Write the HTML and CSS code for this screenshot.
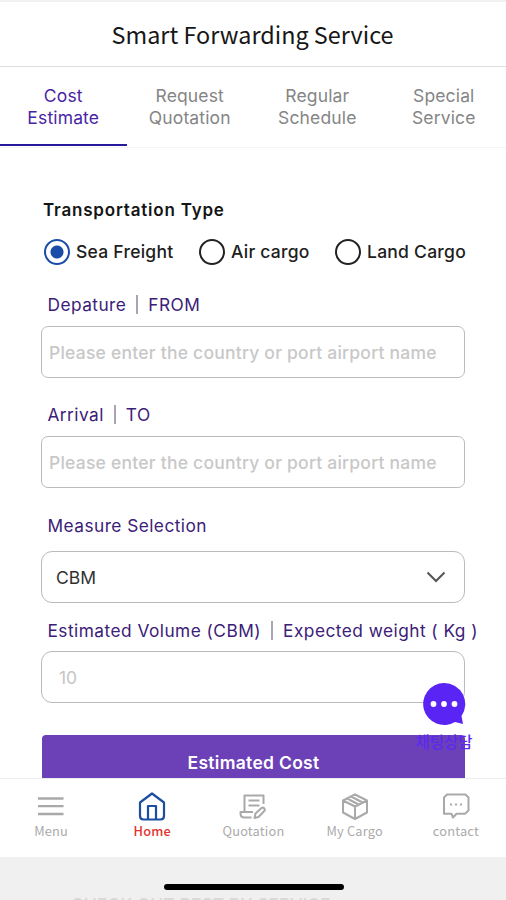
FILE: index.html
```html
<!DOCTYPE html>
<html lang="en">
<head>
<meta charset="utf-8">
<title>Smart Forwarding Service</title>
<link rel="stylesheet" href="styles.css">
</head>
<body>
<header class="header"><h1>Smart Forwarding Service</h1></header>
<nav class="tabs">
  <a class="tab active">Cost<br>Estimate</a>
  <a class="tab">Request<br>Quotation</a>
  <a class="tab">Regular<br>Schedule</a>
  <a class="tab">Special<br>Service</a>
</nav>
<main class="form">
  <h2>Transportation Type</h2>
  <div class="radios">
    <span class="radio checked"><i></i><span>Sea Freight</span></span>
    <span class="radio"><i></i><span>Air cargo</span></span>
    <span class="radio"><i></i><span>Land Cargo</span></span>
  </div>
  <div class="label">Depature<b></b>FROM</div>
  <div class="field hint">Please enter the country or port airport name</div>
  <div class="label arrival">Arrival<b></b>TO</div>
  <div class="field hint">Please enter the country or port airport name</div>
  <div class="label measure">Measure Selection</div>
  <div class="field select">CBM
    <svg width="20" height="12" viewBox="0 0 20 12"><path d="M1.500 1.500L10 10L18.500 1.500" fill="none" stroke="#555" stroke-width="2"/></svg>
  </div>
  <div class="label volume">Estimated Volume (CBM)<b></b>Expected weight ( Kg )</div>
  <div class="field amount">10</div>
  <div class="submit">Estimated Cost</div>
</main>
<div class="chat">
  <svg width="44" height="44" viewBox="0 0 44 44"><path d="M22 1A21 21 0 1 0 33 40L41 42L39.500 34A21 21 0 0 0 22 1Z" fill="#5a24f5"/><g fill="#fff"><circle cx="11.500" cy="22" r="2.900"/><circle cx="22" cy="22" r="2.900"/><circle cx="32.500" cy="22" r="2.900"/></g></svg>
  <span>채팅상담</span>
</div>
<nav class="bottom">
  <a><svg width="32" height="32" viewBox="0 0 32 32"><path d="M3 7.500H28.500M3 15.200H28.500M3 23H28.500" stroke-width="2.300"/></svg><span>Menu</span></a>
  <a class="home"><svg width="32" height="32" viewBox="0 0 32 32"><path d="M16 2.500L4 11.500V25Q4 28.500 7.500 28.500H24.500Q28 28.500 28 25V11.500ZM12 28.500V15H20V28.500" stroke-width="2.200"/></svg><span>Home</span></a>
  <a><svg width="32" height="32" viewBox="0 0 32 32"><path d="M7.500 20.500V4.500H26.500V13M11.500 9.500H22.500M11.500 14.500H22.500M16 21H3.500V22.500Q3.500 26.500 7.500 26.500H14.500M18.500 22.500L24.500 17Q26 16 27.300 17.500Q28.500 19 27 20.300L21.500 26L17.500 27Z"/></svg><span>Quotation</span></a>
  <a><svg width="32" height="32" viewBox="0 0 32 32"><path d="M16 3.500L28 9.500V21.500L16 28L4 21.500V9.500ZM4 9.500L16 15.500L28 9.500M16 15.500V28M12.200 5.500L23.500 11.500M8.200 7.500L19.500 13.500"/></svg><span>My Cargo</span></a>
  <a><svg width="32" height="32" viewBox="0 0 32 32"><path d="M7 3.500H25.500L28.500 6.500V19.500L25 22.800H16.500L13 26.500L11.500 22.800H4V6.500Z"/><path d="M10 13.500H12M15 13.500H17M20 13.500H22"/></svg><span>contact</span></a>
</nav>
<footer class="device"><div class="handle"></div><p>CHECK OUT BEST BY SERVICE</p></footer>
</body>
</html>
```
FILE: styles.css
```css
*{box-sizing:border-box}
body{margin:0;width:506px;height:900px;overflow:hidden;background:#fff;font-family:Inter,"Liberation Sans",sans-serif;display:flex;flex-direction:column;position:relative}
.header{height:67px;flex:none;border-top:2px solid #f1f1f1;border-bottom:1.500px solid #dedede;text-align:center}
.header h1{margin:0;font:400 23.400px/64px "Noto Sans CJK KR","Noto Sans",sans-serif;color:#171717;padding-right:1px}
.tabs{height:81px;flex:none;display:grid;grid-template-columns:repeat(4,1fr);border-bottom:1px solid #f4f4f4}
.tab{padding-top:18px;text-align:center;font-size:17.500px;line-height:22px;letter-spacing:.15px;color:#858585}
.tab:nth-child(n+3){padding-left:2px}
.tab.active{color:#4925a5;border-bottom:2px solid #28189c;margin-bottom:1px}
.form{height:630px;flex:none;padding:52px 41px 0;overflow:hidden}
h2{margin:0 0 0 2px;font-size:17px;line-height:20px;font-weight:600;letter-spacing:.8px;color:#151515}
.radios{display:flex;margin:18px 0 0 3px;height:28px;align-items:center}
.radio{display:flex;align-items:center;gap:6px;flex:none;font-size:17.500px;font-weight:450;color:#202020;width:155px;white-space:nowrap;letter-spacing:.25px}
.radio span{margin-top:-2px}
.radio:nth-child(2){width:136px}
.radio i{width:26px;height:26px;flex:none;border:2px solid #222;border-radius:50%}
.radio.checked i{border-color:#1b4ca8;background:radial-gradient(circle,#1b4ca8 6px,#fff 7px)}
.label{margin:26px 0 10px 6.500px;height:24px;display:flex;align-items:center;font-size:17.300px;letter-spacing:.45px;color:#3b2078;white-space:nowrap}
.label b{width:2px;height:19px;flex:none;margin:0 10px;background:#aaa3b7}
.label.arrival{margin:24px 0 10px 6.500px}
.label.measure{margin:25px 0 14px 6.500px}
.label.volume{margin:15px 0 9px 6.500px;letter-spacing:.47px}
.field{height:52px;width:424px;border:1.500px solid #bbb;border-radius:7px;display:flex;align-items:center;padding:0 7px;font-size:17.500px}
.hint{color:#c8c8c8;font-weight:450;letter-spacing:.23px;white-space:nowrap}
.select{justify-content:space-between;padding:0 18px 0 14px;color:#303030;border-radius:11px}
.amount{padding-left:17px;color:#c5c5c5;border-radius:11px}
.submit{margin:32px 0 0 1px;width:423px;height:57px;border-radius:4px 4px 0 0;background:#6c40b7;color:#fff;text-align:center;font-size:17.500px;font-weight:600;letter-spacing:.3px;line-height:56px}
.chat{position:absolute;left:414px;top:682px;width:60px;display:flex;flex-direction:column;align-items:center}
.chat span{font:500 15.500px/20px "Noto Sans CJK KR",sans-serif;color:#5a2af0;margin-top:5px;white-space:nowrap}
.bottom{height:79px;flex:none;display:grid;grid-template-columns:repeat(5,1fr);background:#fff;border-top:1px solid #ececec}
.bottom a{display:flex;flex-direction:column;align-items:center;padding:12px 0 0 1px;color:#aaa}
.bottom svg{fill:none;stroke:#a9a9a9;stroke-width:2;stroke-linejoin:round}
.bottom span{font:400 12.800px/18px "Noto Sans CJK KR","Noto Sans",sans-serif;letter-spacing:.2px;margin-top:-1px}
.bottom .home{color:#df3430}
.bottom .home svg{stroke:#1d4da0}
.bottom .home span{font-weight:500}
.device{height:43px;flex:none;background:#f0f0f0;display:flex;flex-direction:column;align-items:center;overflow:hidden}
.handle{width:180px;height:6px;flex:none;margin:27px 0 0 1px;border-radius:3px;background:#000}
.device p{margin:6px 0 0;align-self:flex-start;padding-left:71px;font:500 17.500px/18px Inter,sans-serif;color:#d8d8d8;white-space:nowrap}
```
